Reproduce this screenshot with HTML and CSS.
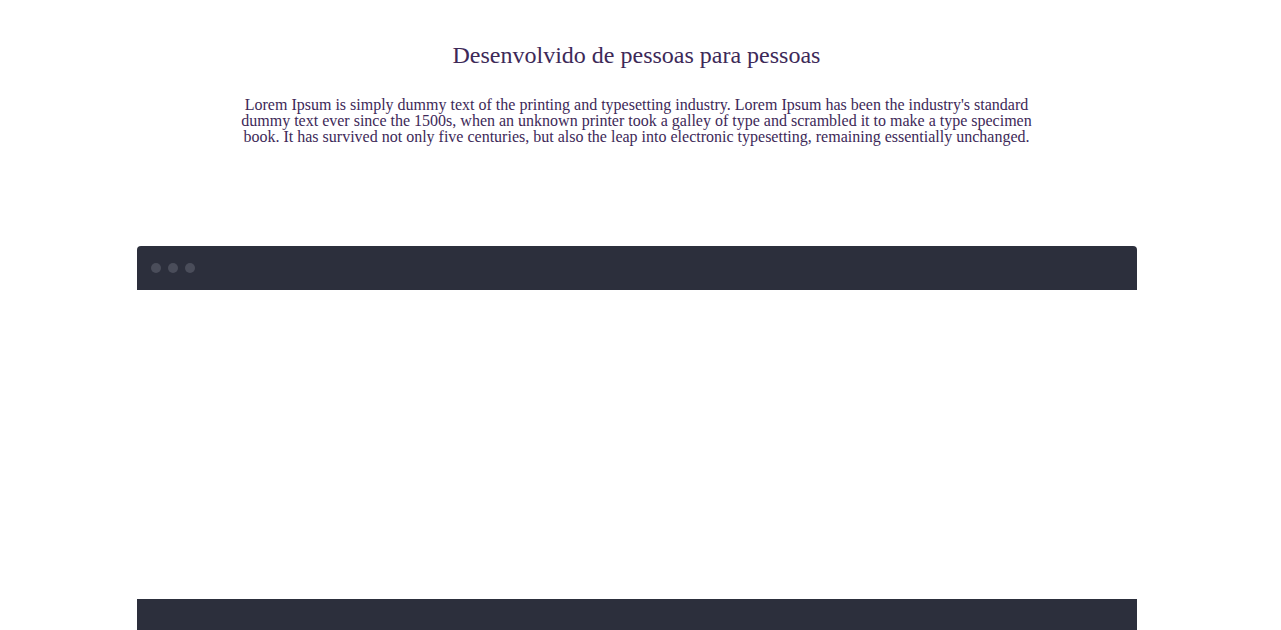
FILE: index.html
```html
<!DOCTYPE html>
<html lang="pt">
<head>
<meta charset="utf-8">
<link rel="stylesheet" href="styles.css">
</head>
<body>
<section class="intro">
  <h2 class="title">Desenvolvido de pessoas para pessoas</h2>
  <p class="text">Lorem Ipsum is simply dummy text of the printing and typesetting industry. Lorem Ipsum has been the industry's standard dummy text ever since the 1500s, when an unknown printer took a galley of type and scrambled it to make a type specimen book. It has survived not only five centuries, but also the leap into electronic typesetting, remaining essentially unchanged.</p>
</section>
<section class="window">
  <div class="window-bar">
    <span class="dot"></span><span class="dot"></span><span class="dot"></span>
  </div>
  <div class="window-body"></div>
</section>
<footer class="footer"></footer>
</body>
</html>
```

FILE: styles.css
```css
html, body {
  margin: 0;
  padding: 0;
  background: #ffffff;
}
body {
  font-family: "Liberation Serif", "Times New Roman", serif;
  color: #3d2958;
  padding-right: 8px;
}
.intro {
  display: flex;
  flex-direction: column;
  align-items: center;
  padding-top: 39px;
}
.title {
  margin: 0;
  font-size: 24px;
  font-weight: normal;
  line-height: 32px;
}
.text {
  margin: 26px 0 0;
  max-width: 800px;
  text-align: center;
  font-size: 16px;
  line-height: 16px;
}
.window {
  width: 1000px;
  margin: 101px auto 0;
}
.window-bar {
  height: 44px;
  background: #2c2f3c;
  border-radius: 4px 4px 0 0;
  display: flex;
  align-items: center;
  gap: 7px;
  padding-left: 14px;
}
.dot {
  width: 10px;
  height: 10px;
  border-radius: 50%;
  background: #4a4d5a;
}
.window-body {
  height: 309px;
}
.footer {
  width: 1000px;
  margin: 0 auto;
  height: 200px;
  background: #2c2f3c;
}
```
